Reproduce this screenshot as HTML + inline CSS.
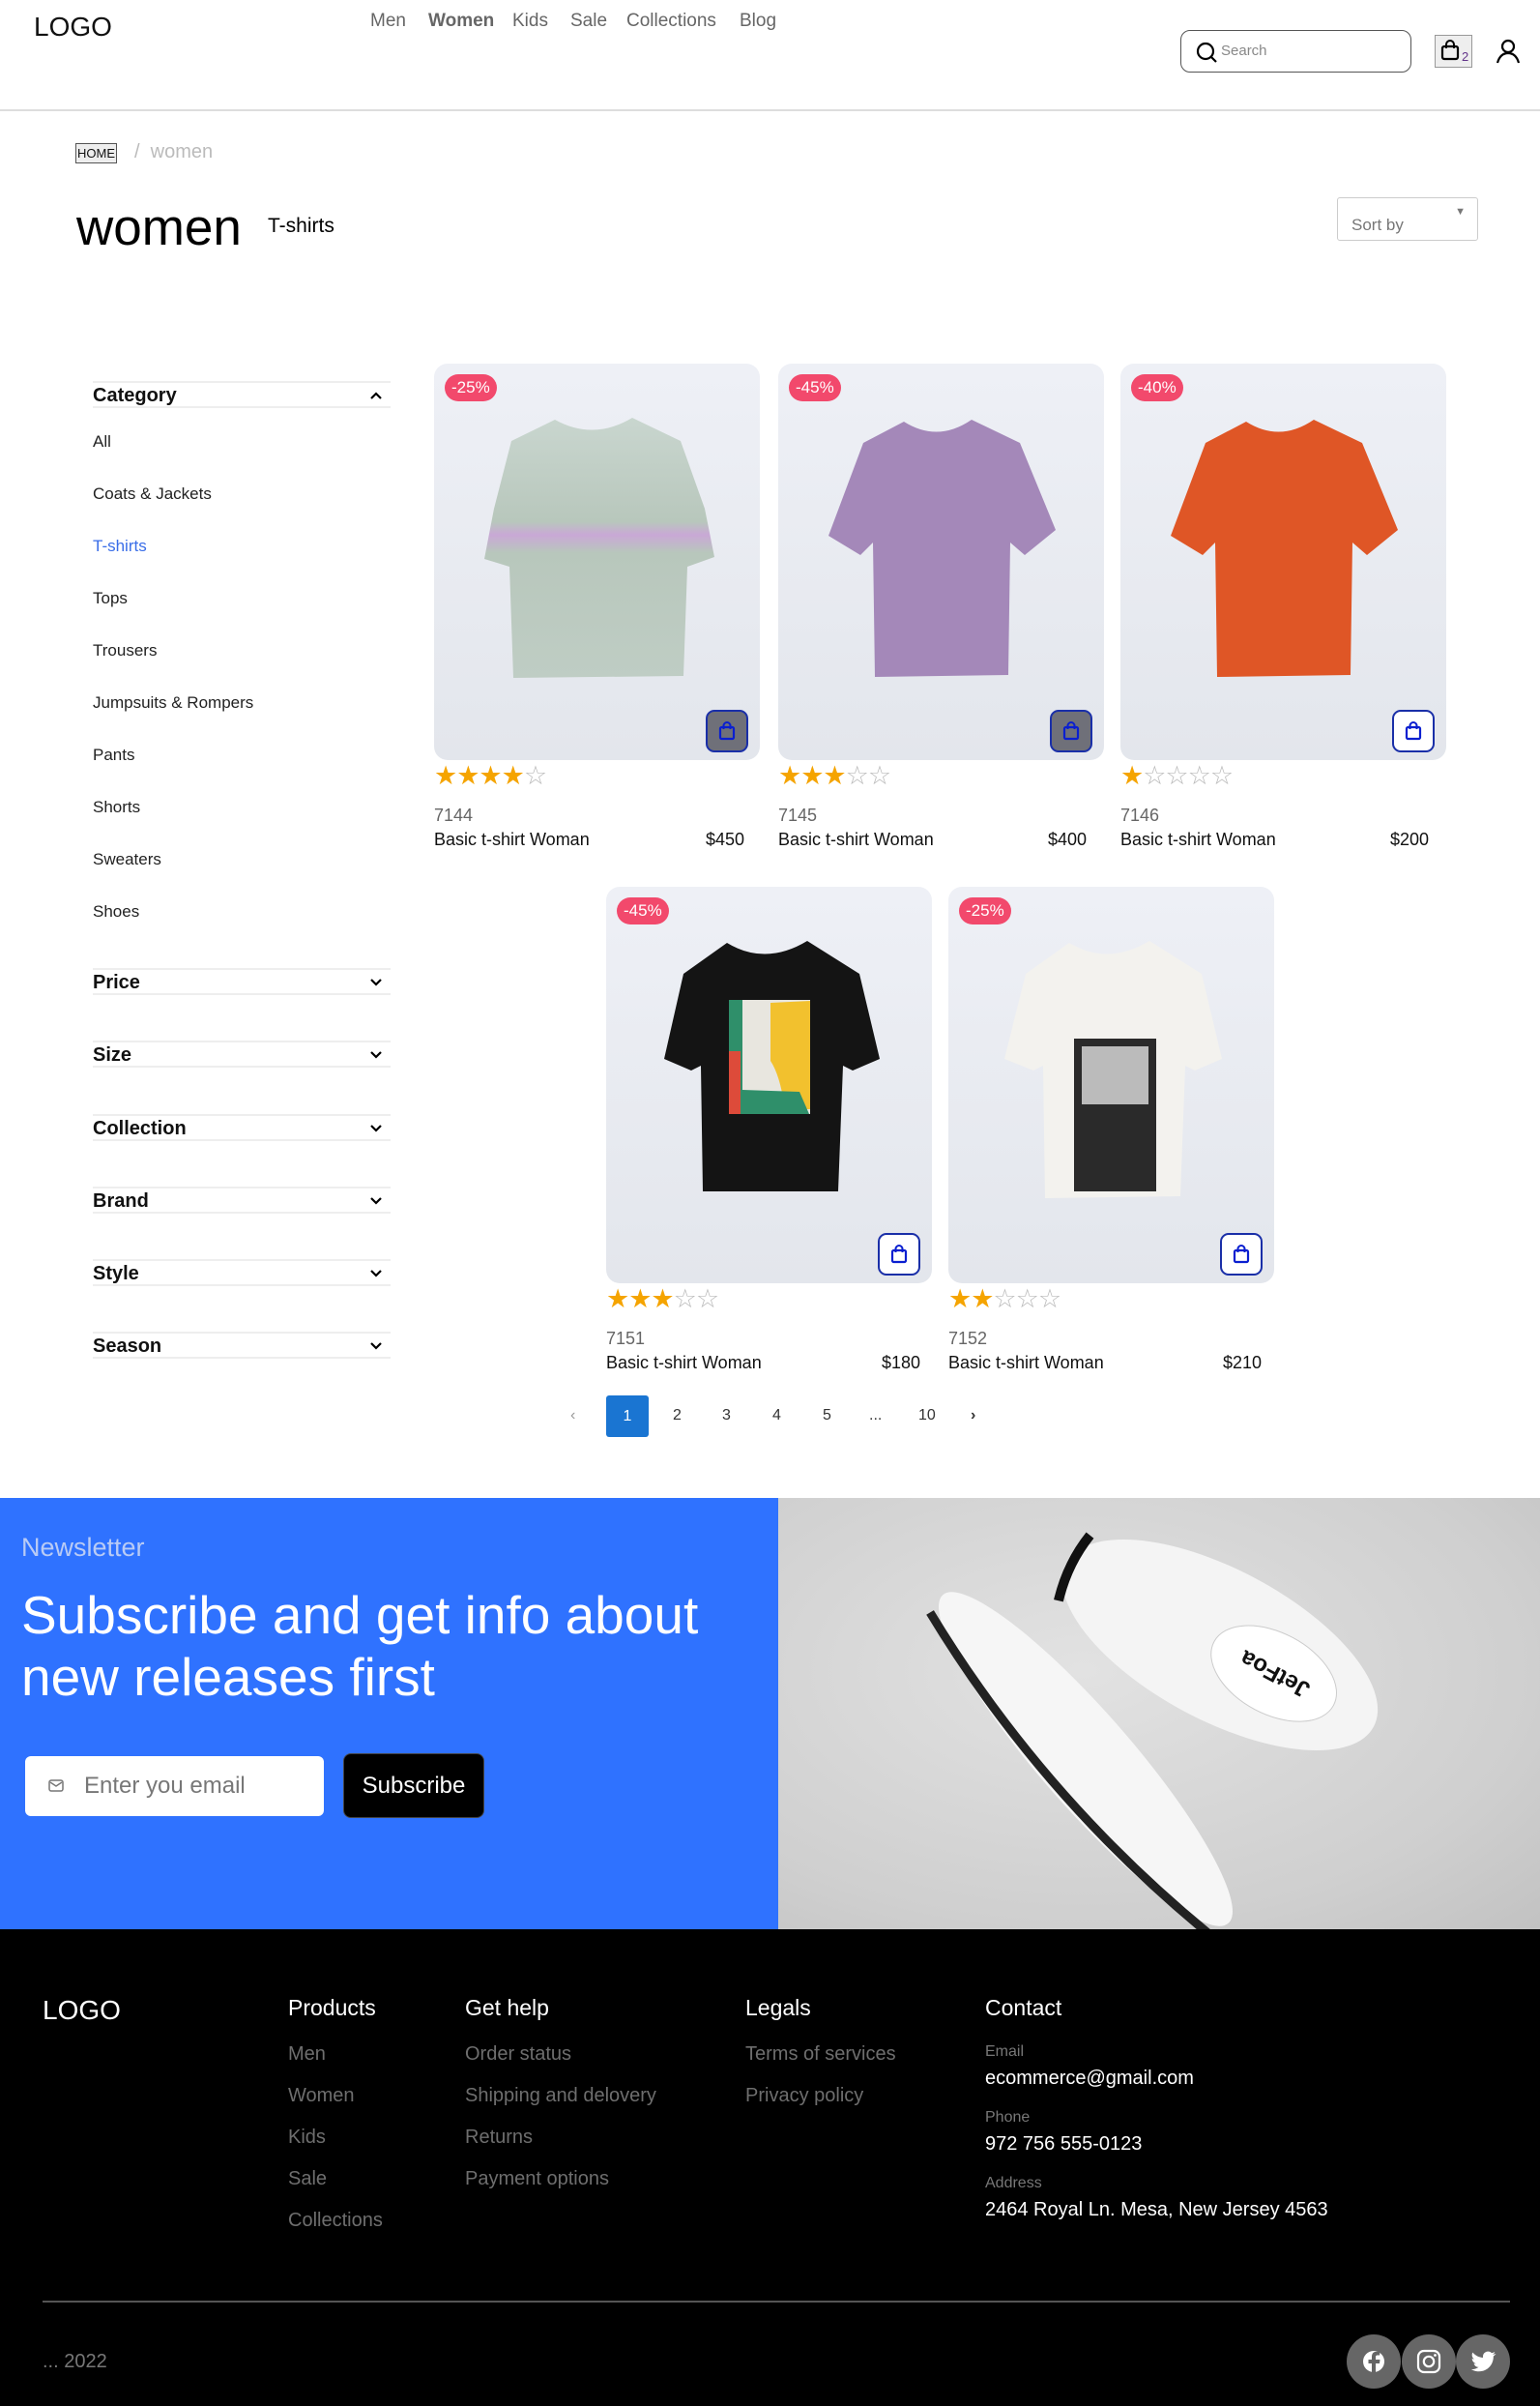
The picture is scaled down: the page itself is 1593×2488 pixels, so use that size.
<!DOCTYPE html>
<html><head><meta charset="utf-8"><style>
*{margin:0;padding:0;box-sizing:border-box}
body{width:1593px;height:2488px;position:relative;background:#fff;font-family:"Liberation Sans",sans-serif;color:#111;overflow:hidden}
.a{position:absolute;white-space:nowrap}
.nav{font-size:19px;color:#666;top:11px}
.cat{left:96px;font-size:17px;color:#222}
.fh{left:96px;width:308px;height:28px;border-top:2px solid #eee;border-bottom:2px solid #eee;font-weight:bold;font-size:20px;padding-top:2px}
.fh svg{position:absolute;right:8px;top:8px}
.card{position:absolute;width:337px;height:410px;border-radius:14px;background:linear-gradient(180deg,#eef0f6,#e3e6ec)}
.badge{position:absolute;left:11px;top:11px;background:#f2496c;color:#fff;font-size:17px;padding:4px 7px;border-radius:14px}
.cb{position:absolute;right:12px;bottom:8px;width:44px;height:44px;border:2px solid #1a2fa8;border-radius:9px;background:#fff;display:flex;align-items:center;justify-content:center}
.cb.g{background:#6f7079}
.stars{position:absolute;font-size:27px;letter-spacing:-1px;color:#f5a400}
.stars span{color:#bbb}
.code{position:absolute;font-size:18px;color:#666}
.nm{position:absolute;font-size:18px;color:#111}
.pg{position:absolute;top:1455px;font-size:16px;color:#333}
.fl{position:absolute;font-size:20px;color:#6e6e6e}
.fhd{position:absolute;font-size:23px;color:#fff;top:2063px}
</style></head><body>
<div class="a" style="left:35px;top:12px;font-size:28px">LOGO</div>
<div class="a nav" style="left:383px">Men</div>
<div class="a nav" style="left:443px;font-weight:bold">Women</div>
<div class="a nav" style="left:530px">Kids</div>
<div class="a nav" style="left:590px">Sale</div>
<div class="a nav" style="left:648px">Collections</div>
<div class="a nav" style="left:765px">Blog</div>
<div class="a" style="left:1221px;top:31px;width:239px;height:44px;border:1px solid #555;border-radius:10px">
<svg style="position:absolute;left:14px;top:10px" width="26" height="26" viewBox="0 0 26 26"><circle cx="11" cy="11" r="8" fill="none" stroke="#000" stroke-width="2.2"/><path d="M17 17l5 5" stroke="#000" stroke-width="2.2"/></svg>
<span style="position:absolute;left:41px;top:12px;font-size:15px;color:#888">Search</span></div>
<div class="a" style="left:1484px;top:36px;width:39px;height:34px;background:#eee;border:1px solid #999">
<svg style="position:absolute;left:5px;top:4px" width="20" height="22" viewBox="0 0 20 22"><rect x="2" y="7" width="16" height="13" rx="2" fill="none" stroke="#000" stroke-width="2.2"/><path d="M6 9V5a4 4 0 0 1 8 0v4" fill="none" stroke="#000" stroke-width="2"/></svg>
<span style="position:absolute;left:27px;top:14px;font-size:13px;color:#63358a">2</span></div>
<svg class="a" style="left:1546px;top:40px" width="28" height="26" viewBox="0 0 28 26"><circle cx="14" cy="8" r="6" fill="none" stroke="#000" stroke-width="2.2"/><path d="M3 25c2-7 6-10 11-10s9 3 11 10" fill="none" stroke="#000" stroke-width="2.2"/></svg>
<div class="a" style="left:0;top:113px;width:1593px;height:2px;background:#ddd"></div>

<div class="a" style="left:78px;top:148px;border:1px solid #555;background:#eee;font-size:13px;padding:2px 1px">HOME</div>
<div class="a" style="left:139px;top:146px;font-size:20px;color:#bbb">/&nbsp;&nbsp;women</div>
<div class="a" style="left:79px;top:205px;font-size:53px;color:#000">women</div>
<div class="a" style="left:277px;top:222px;font-size:21px;color:#000">T-shirts</div>
<div class="a" style="left:1383px;top:204px;width:146px;height:45px;border:1px solid #ccc;border-radius:3px"><span style="position:absolute;left:14px;top:18px;font-size:17px;color:#777">Sort by</span><span style="position:absolute;right:12px;top:8px;font-size:11px;color:#777">▼</span></div>

<div class="a fh" style="top:394px">Category<svg width="14" height="10" viewBox="0 0 14 10"><path d="M2 8l5-5 5 5" fill="none" stroke="#000" stroke-width="2.2"/></svg></div>
<div class="a cat" style="top:447px">All</div>
<div class="a cat" style="top:501px">Coats &amp; Jackets</div>
<div class="a cat" style="top:555px;color:#3a6ee8">T-shirts</div>
<div class="a cat" style="top:609px">Tops</div>
<div class="a cat" style="top:663px">Trousers</div>
<div class="a cat" style="top:717px">Jumpsuits &amp; Rompers</div>
<div class="a cat" style="top:771px">Pants</div>
<div class="a cat" style="top:825px">Shorts</div>
<div class="a cat" style="top:879px">Sweaters</div>
<div class="a cat" style="top:933px">Shoes</div>
<div class="a fh" style="top:1001px">Price<svg width="14" height="10" viewBox="0 0 14 10"><path d="M2 2l5 5 5-5" fill="none" stroke="#000" stroke-width="2.2"/></svg></div>
<div class="a fh" style="top:1076px">Size<svg width="14" height="10" viewBox="0 0 14 10"><path d="M2 2l5 5 5-5" fill="none" stroke="#000" stroke-width="2.2"/></svg></div>
<div class="a fh" style="top:1152px">Collection<svg width="14" height="10" viewBox="0 0 14 10"><path d="M2 2l5 5 5-5" fill="none" stroke="#000" stroke-width="2.2"/></svg></div>
<div class="a fh" style="top:1227px">Brand<svg width="14" height="10" viewBox="0 0 14 10"><path d="M2 2l5 5 5-5" fill="none" stroke="#000" stroke-width="2.2"/></svg></div>
<div class="a fh" style="top:1302px">Style<svg width="14" height="10" viewBox="0 0 14 10"><path d="M2 2l5 5 5-5" fill="none" stroke="#000" stroke-width="2.2"/></svg></div>
<div class="a fh" style="top:1377px">Season<svg width="14" height="10" viewBox="0 0 14 10"><path d="M2 2l5 5 5-5" fill="none" stroke="#000" stroke-width="2.2"/></svg></div>

<div class="card" style="left:449px;top:376px">
<svg width="337" height="410" viewBox="0 0 337 410" style="position:absolute;left:0;top:0"><defs><linearGradient id="td" x1="0" y1="0" x2="0" y2="1"><stop offset="0" stop-color="#c9d6cf"/><stop offset=".4" stop-color="#b8c7bc"/><stop offset=".45" stop-color="#c9a8d6"/><stop offset=".52" stop-color="#b8c7bc"/><stop offset="1" stop-color="#bfcdc4"/></linearGradient></defs><path d="M125 58Q165 80 205 56L255 80L280 150L290 200L262 210L258 323L82 325L78 210L52 202L62 150L80 80Z" fill="url(#td)"/></svg>
<div class="badge">-25%</div><div class="cb g"><svg width="18" height="20" viewBox="0 0 18 20"><rect x="2" y="6" width="14" height="12" rx="1.5" fill="none" stroke="#0a1fd0" stroke-width="2.2"/><path d="M5.5 8V4.5a3.5 3.5 0 0 1 7 0V8" fill="none" stroke="#0a1fd0" stroke-width="2"/></svg></div></div>
<div class="stars" style="left:449px;top:787px">★★★★<span>☆</span></div>
<div class="code" style="left:449px;top:833px">7144</div>
<div class="nm" style="left:449px;top:858px">Basic t-shirt Woman</div>
<div class="nm" style="left:730px;top:858px">$450</div>

<div class="card" style="left:805px;top:376px">
<svg width="337" height="410" viewBox="0 0 337 410" style="position:absolute;left:0;top:0"><path d="M130 60Q165 82 200 58L250 82L287 172L255 198L240 185L238 322L100 324L98 185L85 198L52 178L88 82Z" fill="#a488b9"/></svg>
<div class="badge">-45%</div><div class="cb g"><svg width="18" height="20" viewBox="0 0 18 20"><rect x="2" y="6" width="14" height="12" rx="1.5" fill="none" stroke="#0a1fd0" stroke-width="2.2"/><path d="M5.5 8V4.5a3.5 3.5 0 0 1 7 0V8" fill="none" stroke="#0a1fd0" stroke-width="2"/></svg></div></div>
<div class="stars" style="left:805px;top:787px">★★★<span>☆☆</span></div>
<div class="code" style="left:805px;top:833px">7145</div>
<div class="nm" style="left:805px;top:858px">Basic t-shirt Woman</div>
<div class="nm" style="left:1084px;top:858px">$400</div>

<div class="card" style="left:1159px;top:376px">
<svg width="337" height="410" viewBox="0 0 337 410" style="position:absolute;left:0;top:0"><path d="M130 60Q165 82 200 58L250 82L287 172L255 198L240 185L238 322L100 324L98 185L85 198L52 178L88 82Z" fill="#df5626"/></svg>
<div class="badge">-40%</div><div class="cb"><svg width="18" height="20" viewBox="0 0 18 20"><rect x="2" y="6" width="14" height="12" rx="1.5" fill="none" stroke="#0a1fd0" stroke-width="2.2"/><path d="M5.5 8V4.5a3.5 3.5 0 0 1 7 0V8" fill="none" stroke="#0a1fd0" stroke-width="2"/></svg></div></div>
<div class="stars" style="left:1159px;top:787px">★<span>☆☆☆☆</span></div>
<div class="code" style="left:1159px;top:833px">7146</div>
<div class="nm" style="left:1159px;top:858px">Basic t-shirt Woman</div>
<div class="nm" style="left:1438px;top:858px">$200</div>

<div class="card" style="left:627px;top:917px">
<svg width="337" height="410" viewBox="0 0 337 410" style="position:absolute;left:0;top:0"><path d="M125 58Q165 82 208 56L262 90L283 178L255 190L245 185L240 315L100 315L98 185L88 190L60 178L80 90Z" fill="#141414"/><rect x="127" y="117" width="84" height="118" fill="#e8e6df"/><rect x="127" y="117" width="14" height="118" fill="#2f8f6a"/><rect x="127" y="170" width="12" height="65" fill="#dd4b3a"/><path d="M170 120L211 118L211 230L185 230Q180 195 170 180Z" fill="#f2c12e"/><path d="M141 210L200 212L210 235L141 235Z" fill="#2f8f6a"/></svg>
<div class="badge">-45%</div><div class="cb"><svg width="18" height="20" viewBox="0 0 18 20"><rect x="2" y="6" width="14" height="12" rx="1.5" fill="none" stroke="#0a1fd0" stroke-width="2.2"/><path d="M5.5 8V4.5a3.5 3.5 0 0 1 7 0V8" fill="none" stroke="#0a1fd0" stroke-width="2"/></svg></div></div>
<div class="stars" style="left:627px;top:1328px">★★★<span>☆☆</span></div>
<div class="code" style="left:627px;top:1374px">7151</div>
<div class="nm" style="left:627px;top:1399px">Basic t-shirt Woman</div>
<div class="nm" style="left:912px;top:1399px">$180</div>

<div class="card" style="left:981px;top:917px">
<svg width="337" height="410" viewBox="0 0 337 410" style="position:absolute;left:0;top:0"><path d="M125 58Q165 82 208 56L262 90L283 178L255 190L245 185L240 320L100 322L98 185L88 190L58 178L80 90Z" fill="#f3f2ee"/><rect x="130" y="157" width="85" height="158" fill="#2a2a2a"/><rect x="138" y="165" width="69" height="60" fill="#bbb"/></svg>
<div class="badge">-25%</div><div class="cb"><svg width="18" height="20" viewBox="0 0 18 20"><rect x="2" y="6" width="14" height="12" rx="1.5" fill="none" stroke="#0a1fd0" stroke-width="2.2"/><path d="M5.5 8V4.5a3.5 3.5 0 0 1 7 0V8" fill="none" stroke="#0a1fd0" stroke-width="2"/></svg></div></div>
<div class="stars" style="left:981px;top:1328px">★★<span>☆☆☆</span></div>
<div class="code" style="left:981px;top:1374px">7152</div>
<div class="nm" style="left:981px;top:1399px">Basic t-shirt Woman</div>
<div class="nm" style="left:1265px;top:1399px">$210</div>

<div class="pg" style="left:590px;color:#999">‹</div>
<div class="a" style="left:627px;top:1443px;width:44px;height:43px;background:#1a75d2;border-radius:3px;color:#fff;font-size:16px;text-align:center;line-height:43px">1</div>
<div class="pg" style="left:696px">2</div>
<div class="pg" style="left:747px">3</div>
<div class="pg" style="left:799px">4</div>
<div class="pg" style="left:851px">5</div>
<div class="pg" style="left:899px">...</div>
<div class="pg" style="left:950px">10</div>
<div class="pg" style="left:1004px;font-weight:bold">›</div>

<div class="a" style="left:0;top:1549px;width:805px;height:446px;background:#2f72ff"></div>
<div class="a" style="left:22px;top:1585px;font-size:27px;color:#b9cbf5">Newsletter</div>
<div class="a" style="left:22px;top:1638px;font-size:55px;color:#fff;line-height:64px">Subscribe and get info about<br>new releases first</div>
<div class="a" style="left:26px;top:1816px;width:309px;height:62px;background:#fff;border-radius:6px">
<svg style="position:absolute;left:24px;top:24px" width="16" height="13" viewBox="0 0 16 13"><rect x="1" y="1" width="14" height="11" rx="2" fill="none" stroke="#777" stroke-width="1.5"/><path d="M2 3l6 4 6-4" fill="none" stroke="#777" stroke-width="1.5"/></svg>
<span style="position:absolute;left:61px;top:17px;font-size:24px;color:#777">Enter you email</span></div>
<div class="a" style="left:355px;top:1813px;width:146px;height:67px;background:#000;border:1px solid #444;border-radius:8px;color:#fff;font-size:24px;text-align:center;line-height:65px">Subscribe</div>
<div class="a" style="left:805px;top:1549px;width:788px;height:446px;background:radial-gradient(ellipse at 40% 40%,#e2e2e2,#cfcfcf 70%,#c2c2c2);overflow:hidden">
<svg width="788" height="446" viewBox="0 0 788 446"><g transform="rotate(28 457 152)"><ellipse cx="457" cy="152" rx="180" ry="78" fill="#f4f4f4"/><ellipse cx="520" cy="152" rx="70" ry="42" fill="#fff" stroke="#ccc"/><text x="480" y="160" font-family="Liberation Sans" font-weight="bold" font-size="24" fill="#111" transform="rotate(180 520 152)">JetFoa</text><path d="M285 115Q278 152 288 190" stroke="#111" stroke-width="10" fill="none"/></g><g transform="rotate(49 318 270)"><ellipse cx="318" cy="270" rx="225" ry="48" fill="#f6f6f6"/><path d="M98 292Q318 330 540 292" stroke="#222" stroke-width="9" fill="none"/></g></svg></div>

<div class="a" style="left:0;top:1995px;width:1593px;height:493px;background:#000"></div>
<div class="a" style="left:44px;top:2063px;font-size:28px;color:#fff">LOGO</div>
<div class="fhd" style="left:298px">Products</div>
<div class="fhd" style="left:481px">Get help</div>
<div class="fhd" style="left:771px">Legals</div>
<div class="fhd" style="left:1019px">Contact</div>
<div class="fl" style="left:298px;top:2113px">Men</div>
<div class="fl" style="left:298px;top:2156px">Women</div>
<div class="fl" style="left:298px;top:2199px">Kids</div>
<div class="fl" style="left:298px;top:2242px">Sale</div>
<div class="fl" style="left:298px;top:2285px">Collections</div>
<div class="fl" style="left:481px;top:2113px">Order status</div>
<div class="fl" style="left:481px;top:2156px">Shipping and delovery</div>
<div class="fl" style="left:481px;top:2199px">Returns</div>
<div class="fl" style="left:481px;top:2242px">Payment options</div>
<div class="fl" style="left:771px;top:2113px">Terms of services</div>
<div class="fl" style="left:771px;top:2156px">Privacy policy</div>
<div class="a" style="left:1019px;top:2113px;font-size:16px;color:#777">Email</div>
<div class="a" style="left:1019px;top:2138px;font-size:20px;color:#fff">ecommerce@gmail.com</div>
<div class="a" style="left:1019px;top:2181px;font-size:16px;color:#777">Phone</div>
<div class="a" style="left:1019px;top:2206px;font-size:20px;color:#fff">972 756 555-0123</div>
<div class="a" style="left:1019px;top:2249px;font-size:16px;color:#777">Address</div>
<div class="a" style="left:1019px;top:2274px;font-size:20px;color:#fff">2464 Royal Ln. Mesa, New Jersey 4563</div>
<div class="a" style="left:44px;top:2379px;width:1518px;height:2px;background:#555"></div>
<div class="a" style="left:44px;top:2431px;font-size:20px;color:#777">... 2022</div>
<svg class="a" style="left:1392px;top:2414px" width="172" height="57" viewBox="0 0 172 57"><circle cx="29" cy="28" r="28" fill="#666"/><circle cx="86" cy="28" r="28" fill="#666"/><circle cx="142" cy="28" r="28" fill="#666"/><circle cx="29" cy="28" r="11" fill="#fff"/><path d="M31 41V30h4l.5-4H31v-2.5c0-1.2.4-2 2-2h2.2v-3.5c-.4 0-1.7-.2-3.2-.2-3.2 0-5 1.9-5 5.4V26h-3.5v4H27v11z" fill="#666"/><rect x="75" y="17" width="22" height="22" rx="6" fill="none" stroke="#fff" stroke-width="2.2"/><circle cx="86" cy="28" r="5.2" fill="none" stroke="#fff" stroke-width="2.2"/><circle cx="92.5" cy="21.5" r="1.4" fill="#fff"/><path d="M155 20c-1 .5-2 .7-3 .8 1-.6 1.900-1.6 2.300-2.800-1 .6-2.100 1-3.300 1.300a5.200 5.200 0 0 0-8.900 4.700c-4.300-.2-8.100-2.300-10.700-5.400-1.400 2.400-.7 5.500 1.600 7-.8 0-1.600-.3-2.300-.7 0 2.500 1.800 4.700 4.200 5.200-.8.2-1.600.2-2.300.1.7 2.100 2.600 3.600 4.900 3.600a10.500 10.500 0 0 1-7.700 2.200c2.300 1.500 5.100 2.300 8 2.300 9.700 0 15-8 15-15v-.7c1-.7 1.900-1.600 2.600-2.600z" fill="#fff"/></svg>
</body></html>
